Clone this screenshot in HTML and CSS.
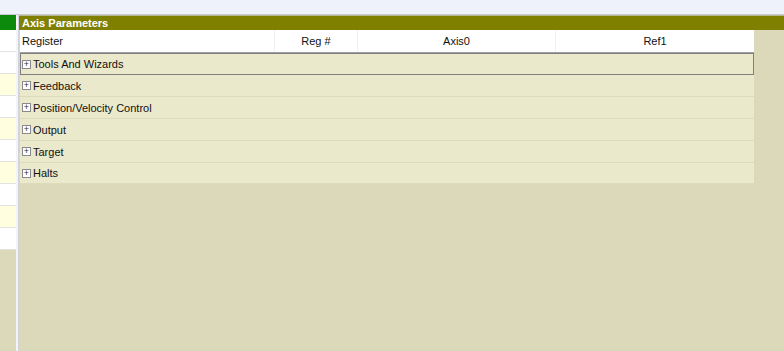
FILE: index.html
```html
<!DOCTYPE html>
<html lang="en">
<head>
    <meta charset="UTF-8">
    <title>Axis Parameters</title>
    <link rel="stylesheet" href="styles.css">
</head>
<body>
    <div class="topbar"></div>
    <div class="main">
        <div class="left">
            <div class="left-head"></div>
            <div class="lrow"></div>
            <div class="lrow"></div>
            <div class="lrow alt"></div>
            <div class="lrow"></div>
            <div class="lrow alt"></div>
            <div class="lrow"></div>
            <div class="lrow alt"></div>
            <div class="lrow"></div>
            <div class="lrow alt"></div>
            <div class="lrow"></div>
        </div>
        <div class="splitter"></div>
        <div class="right">
            <div class="panel-head">Axis Parameters</div>
            <div class="grid">
                <div class="row head">
                    <div class="cell first">Register</div>
                    <div class="cell center">Reg #</div>
                    <div class="cell center">Axis0</div>
                    <div class="cell center">Ref1</div>
                </div>
                <div class="row group selected"><span class="plus">+</span>Tools And Wizards</div>
                <div class="row group"><span class="plus">+</span>Feedback</div>
                <div class="row group"><span class="plus">+</span>Position/Velocity Control</div>
                <div class="row group"><span class="plus">+</span>Output</div>
                <div class="row group"><span class="plus">+</span>Target</div>
                <div class="row group"><span class="plus">+</span>Halts</div>
            </div>
        </div>
    </div>
</body>
</html>
```

FILE: styles.css
```css
html, body {
    margin: 0;
    padding: 0;
    height: 100%;
}
body {
    font-family: "Liberation Sans", Arial, sans-serif;
    font-size: 11px;
    color: #111;
    background: #dbd9b9;
    display: flex;
    flex-direction: column;
    overflow: hidden;
}
.topbar {
    height: 14px;
    background: #eef2fb;
    border-bottom: 1px solid #c8cad0;
}
.main {
    flex: 1;
    display: flex;
}
.left {
    width: 16px;
    background: #dbd9b9;
}
.left-head {
    height: 15px;
    background: #0b8a0b;
}
.lrow {
    height: 21px;
    background: #fff;
    border-bottom: 1px solid #e2e2e2;
}
.lrow.alt {
    background: #ffffe0;
}
.splitter {
    width: 2px;
    background: #f4f4f4;
    border-right: 1px solid #cfd2dc;
}
.right {
    flex: 1;
    padding-left: 1px;
}
.panel-head {
    height: 14px;
    line-height: 14px;
    margin-left: -1px;
    border-top: 1px solid #b8b890;
    background: #808000;
    color: #fff;
    font-weight: bold;
    padding-left: 3px;
}
.grid {
    width: 734px;
}
.row {
    height: 22px;
    display: flex;
    align-items: center;
}
.row.head {
    background: #fff;
    border-bottom: 1px solid #a0a0a0;
}
.cell {
    height: 100%;
    display: flex;
    align-items: center;
    border-right: 1px solid #f0f0f0;
    box-sizing: border-box;
}
.cell.first {
    width: 255px;
    padding-left: 2px;
}
.cell.center {
    justify-content: center;
}
.cell:nth-child(2) {
    width: 83px;
}
.cell:nth-child(3) {
    width: 198px;
}
.cell:nth-child(4) {
    width: 198px;
    border-right: none;
}
.row.group {
    background: #ebe9cb;
    border-bottom: 1px solid #dddbbd;
    box-sizing: border-box;
    height: 22px;
    padding-left: 2px;
}
.row.group:last-child {
    height: 21px;
}
.row.selected {
    border: 1px solid #7f7f7f;
    padding-left: 1px;
}
.plus {
    width: 7px;
    height: 7px;
    border: 1px solid #8a8a8a;
    background: #fff;
    font-size: 9px;
    line-height: 7px;
    text-align: center;
    color: #333;
    margin-right: 2px;
}
```
